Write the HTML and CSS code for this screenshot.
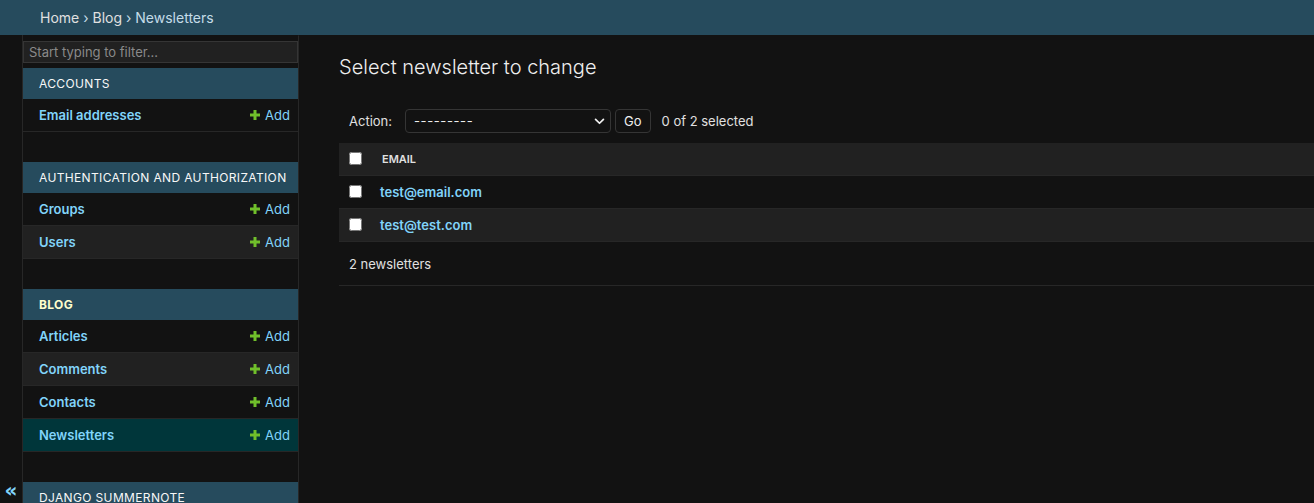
FILE: index.html
```html
<!DOCTYPE html>
<html lang="en">
<head>
<meta charset="utf-8">
<title>Select newsletter to change</title>
<link rel="stylesheet" href="styles.css">
</head>
<body>
<div class="breadcrumbs">
  <a href="#">Home</a> › <a href="#">Blog</a> › Newsletters
</div>
<div class="main">
  <button class="toggle-nav" type="button" aria-label="Toggle navigation">«</button>
  <nav class="sidebar">
    <input class="nav-filter" type="search" placeholder="Start typing to filter...">
    <table class="module">
      <caption><a href="#">Accounts</a></caption>
      <tbody>
        <tr><th><a href="#">Email addresses</a></th><td><a class="addlink" href="#"><svg class="plus" viewBox="0 0 10 10"><rect x="3.5" y="0" width="3" height="10"/><rect x="0" y="3.5" width="10" height="3"/></svg>Add</a></td></tr>
      </tbody>
    </table>
    <table class="module">
      <caption><a href="#">Authentication and Authorization</a></caption>
      <tbody>
        <tr><th><a href="#">Groups</a></th><td><a class="addlink" href="#"><svg class="plus" viewBox="0 0 10 10"><rect x="3.5" y="0" width="3" height="10"/><rect x="0" y="3.5" width="10" height="3"/></svg>Add</a></td></tr>
        <tr><th><a href="#">Users</a></th><td><a class="addlink" href="#"><svg class="plus" viewBox="0 0 10 10"><rect x="3.5" y="0" width="3" height="10"/><rect x="0" y="3.5" width="10" height="3"/></svg>Add</a></td></tr>
      </tbody>
    </table>
    <table class="module current-app">
      <caption><a href="#">Blog</a></caption>
      <tbody>
        <tr><th><a href="#">Articles</a></th><td><a class="addlink" href="#"><svg class="plus" viewBox="0 0 10 10"><rect x="3.5" y="0" width="3" height="10"/><rect x="0" y="3.5" width="10" height="3"/></svg>Add</a></td></tr>
        <tr><th><a href="#">Comments</a></th><td><a class="addlink" href="#"><svg class="plus" viewBox="0 0 10 10"><rect x="3.5" y="0" width="3" height="10"/><rect x="0" y="3.5" width="10" height="3"/></svg>Add</a></td></tr>
        <tr><th><a href="#">Contacts</a></th><td><a class="addlink" href="#"><svg class="plus" viewBox="0 0 10 10"><rect x="3.5" y="0" width="3" height="10"/><rect x="0" y="3.5" width="10" height="3"/></svg>Add</a></td></tr>
        <tr class="current-model"><th><a href="#">Newsletters</a></th><td><a class="addlink" href="#"><svg class="plus" viewBox="0 0 10 10"><rect x="3.5" y="0" width="3" height="10"/><rect x="0" y="3.5" width="10" height="3"/></svg>Add</a></td></tr>
      </tbody>
    </table>
    <div class="module-caption"><a href="#">Django Summernote</a></div>
  </nav>
  <main class="content">
    <h1>Select newsletter to change</h1>
    <div class="actions">
      <label class="action-label">Action:</label>
      <span class="select-wrap">
        <select class="action-select">
          <option>---------</option>
          <option>Delete selected newsletters</option>
        </select>
        <svg class="chevron" viewBox="0 0 12 8"><path d="M1.5 1.5 L6 6 L10.5 1.5" fill="none" stroke="#f0f0f0" stroke-width="2" stroke-linecap="round" stroke-linejoin="round"/></svg>
      </span>
      <button class="go-button" type="button">Go</button>
      <span class="action-counter">0 of 2 selected</span>
    </div>
    <table class="results">
      <thead>
        <tr>
          <th class="check-col"><input type="checkbox"></th>
          <th class="text-col">Email</th>
        </tr>
      </thead>
      <tbody>
        <tr><td class="check-col"><input type="checkbox"></td><th class="text-col"><a href="#">test@email.com</a></th></tr>
        <tr><td class="check-col"><input type="checkbox"></td><th class="text-col"><a href="#">test@test.com</a></th></tr>
      </tbody>
    </table>
    <p class="paginator">2 newsletters</p>
  </main>
</div>
</body>
</html>
```

FILE: styles.css
```css
html, body {
  margin: 0;
  padding: 0;
}

body {
  background: #121212;
  color: #eeeeee;
  font-family: Inter, "Liberation Sans", Arial, sans-serif;
  font-size: 14px;
  overflow: hidden;
}

a {
  color: #81d4fa;
  text-decoration: none;
}

.breadcrumbs {
  background: #264b5d;
  color: #c4dce8;
  padding: 10px 40px;
  font-size: 14px;
  line-height: 15px;
}

.breadcrumbs a {
  color: #e0e0e0;
}

.main {
  display: flex;
  height: 468px;
  overflow: hidden;
}

.toggle-nav {
  flex: 0 0 23px;
  width: 23px;
  display: flex;
  align-items: flex-end;
  justify-content: center;
  padding: 0 0 2px;
  margin: 0;
  border: 0;
  border-right: 1px solid #272727;
  background: #121212;
  color: #81d4fa;
  font-family: "DejaVu Sans", sans-serif;
  font-size: 20px;
  font-weight: bold;
  line-height: 22px;
}

.sidebar {
  flex: 0 0 275px;
  width: 275px;
  border-top: 1px solid transparent;
  border-right: 1px solid #272727;
  background: #121212;
  overflow: hidden;
}

.nav-filter {
  display: block;
  box-sizing: border-box;
  width: 100%;
  height: 22px;
  margin: 5px 0;
  padding: 2px 5px;
  border: 1px solid #353535;
  background: #212121;
  color: #eeeeee;
  font-family: Inter, "Liberation Sans", Arial, sans-serif;
  font-size: 13px;
  outline: none;
  -webkit-appearance: none;
  appearance: none;
}

.nav-filter::placeholder {
  color: #8a8a8a;
}

.module {
  width: 100%;
  border-collapse: collapse;
  margin-bottom: 30px;
  background: #121212;
}

.module caption,
.module-caption {
  background: #264b5d;
  padding: 8px 0 8px 16px;
  text-align: left;
  font-size: 12px;
  line-height: 15px;
  letter-spacing: 0.35px;
  text-transform: uppercase;
  font-weight: 400;
  white-space: nowrap;
}

.module caption a,
.module-caption a {
  color: #f7f7f7;
}

.current-app caption a {
  color: #ffffcc;
  font-weight: 700;
}

.module th,
.module td {
  padding: 8px;
  font-size: 13px;
  line-height: 16px;
  border-bottom: 1px solid #272727;
  white-space: nowrap;
  vertical-align: top;
}

.module th {
  padding-left: 16px;
  text-align: left;
  font-weight: 600;
}

.module td {
  text-align: right;
}

.module tbody tr:nth-child(even) {
  background: #212121;
}

.module tbody tr.current-model {
  background: #00363a;
}

.addlink {
  display: inline-flex;
  align-items: center;
  gap: 5px;
}

.plus {
  width: 10px;
  height: 10px;
  fill: #70bf2b;
}

.content {
  flex: 1;
  min-width: 0;
  padding: 20px 0 0 40px;
}

h1 {
  margin: 0 0 20px;
  font-size: 20px;
  line-height: 24px;
  font-weight: 300;
  color: #eeeeee;
}

.actions {
  display: flex;
  align-items: center;
  padding: 10px;
  line-height: 24px;
  font-size: 13px;
  color: #e0e0e0;
}

.select-wrap {
  position: relative;
  display: inline-flex;
  margin-left: 13px;
}

.action-select {
  -webkit-appearance: none;
  appearance: none;
  box-sizing: border-box;
  width: 206px;
  height: 24px;
  padding: 0 20px 0 8px;
  border: 1px solid #353535;
  border-radius: 4px;
  background: #121212;
  color: #eeeeee;
  font-family: Inter, "Liberation Sans", Arial, sans-serif;
  font-size: 13px;
  letter-spacing: 0.6px;
}

.chevron {
  position: absolute;
  right: 6px;
  top: 9px;
  width: 11px;
  height: 7px;
  pointer-events: none;
}

.go-button {
  box-sizing: border-box;
  height: 24px;
  margin-left: 4px;
  padding: 4px 8px;
  border: 1px solid #353535;
  border-radius: 4px;
  background: #121212;
  color: #eeeeee;
  font-family: Inter, "Liberation Sans", Arial, sans-serif;
  font-size: 13px;
  line-height: 1;
}

.action-counter {
  margin-left: 11px;
}

.results {
  width: 100%;
  border-collapse: collapse;
}

.results thead th {
  height: 32px;
  box-sizing: border-box;
  background: #212121;
  color: #e0e0e0;
  font-size: 11px;
  font-weight: 600;
  text-transform: uppercase;
  text-align: left;
  vertical-align: middle;
  padding: 0 10px;
  border-bottom: 1px solid #272727;
}

.results .check-col {
  width: 13px;
  padding: 0 10px;
}

.results thead th.check-col {
  padding: 0 10px;
}

.results input[type="checkbox"] {
  display: block;
  width: 13px;
  height: 13px;
  margin: 0;
}

.results tbody td,
.results tbody th {
  padding: 8px;
  font-size: 13px;
  line-height: 16px;
  border-bottom: 1px solid #272727;
  text-align: left;
  vertical-align: middle;
}

.results tbody td.check-col {
  padding: 8px 10px;
}

.results tbody th {
  font-weight: 600;
}

.results tbody tr:nth-child(even) {
  background: #212121;
}

.paginator {
  margin: 0;
  padding: 11px 10px 10px;
  font-size: 13px;
  line-height: 22px;
  color: #e0e0e0;
  border-bottom: 1px solid #272727;
}
```
